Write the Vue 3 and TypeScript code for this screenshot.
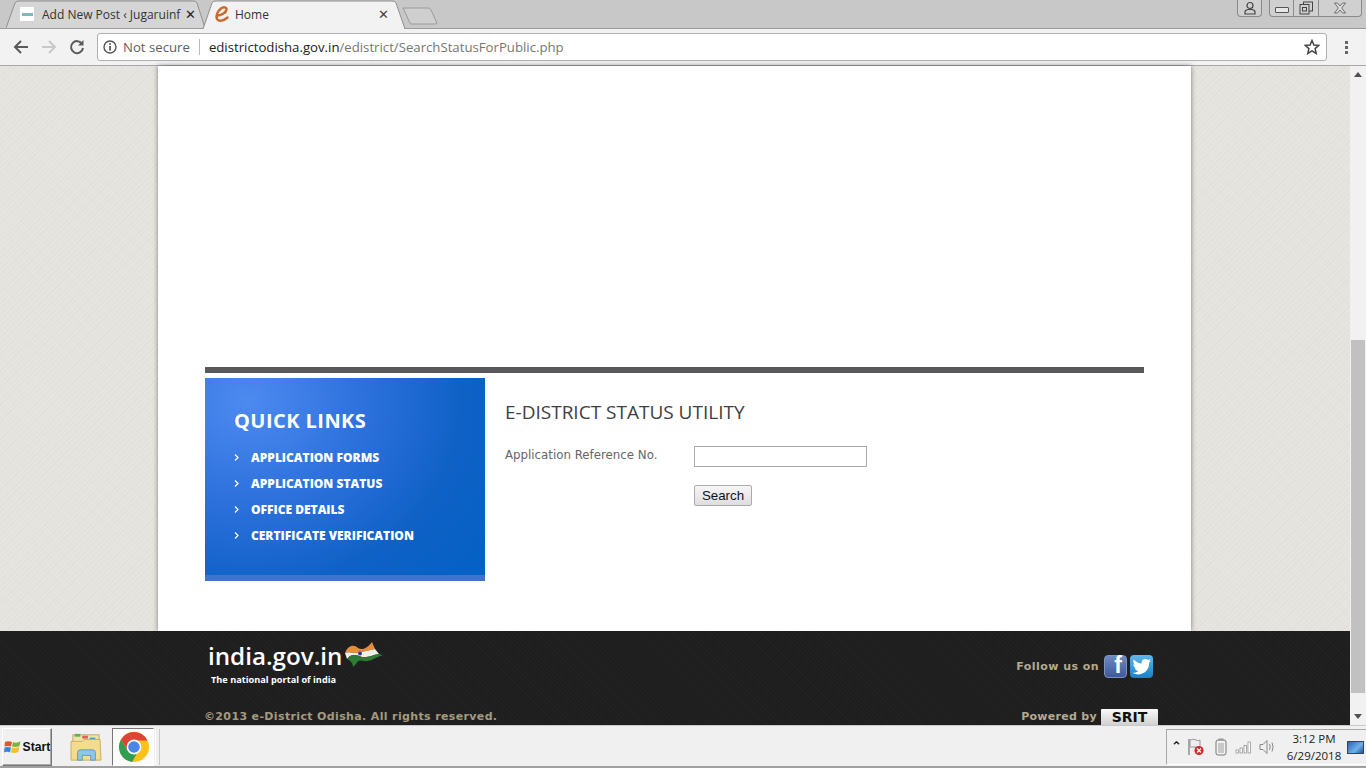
<script setup lang="ts">
const quickLinks: string[] = [
  'APPLICATION FORMS',
  'APPLICATION STATUS',
  'OFFICE DETAILS',
  'CERTIFICATE VERIFICATION',
]
</script>

<template>
  <div class="screen">
    <!-- browser chrome -->
    <header class="tabstrip">
      <div class="tab">
        <svg class="tab-shape" width="202" height="28" viewBox="0 0 202 28">
          <path d="M0 28 L9 3 Q10 1 13 1 L187 1 Q190 1 191 3 L199 28" fill="#d5d5d5" stroke="#8f8f8f" />
        </svg>
        <span class="favicon-site">
          <i></i>
        </span>
        <span class="tab-title">Add New Post ‹ Jugaruinf</span>
        <span class="tab-close dark">✕</span>
      </div>
      <div class="tab active">
        <svg class="tab-shape" width="204" height="29" viewBox="0 0 204 29">
          <path d="M0 29 L9 3 Q10 1 13 1 L189 1 Q192 1 193 3 L202 29" fill="#f2f2f2" stroke="#8f8f8f" />
        </svg>
        <svg class="favicon-e" width="16" height="18" viewBox="0 0 16 18">
          <path d="M3 10.5 C7 10.5 12 8 12.5 4.5 C12.8 2 9.5 1.5 7 3.5 C3.5 6.2 1.5 11 3 14 C4.5 16.8 9.5 16 13.5 12.5" fill="none" stroke="#c8682a" stroke-width="2.4" stroke-linecap="round" />
        </svg>
        <span class="tab-title home">Home</span>
        <span class="tab-close">✕</span>
      </div>
      <svg class="new-tab" width="36" height="18" viewBox="0 0 36 18">
        <path d="M1 1 L26 1 Q28 1 29 3 L35 16 Q35 17 33 17 L10 17 Q8 17 8 16 Z" fill="#cfcfcf" stroke="#9a9a9a" />
      </svg>
      <div class="window-controls">
        <div class="win-group user">
          <svg width="14" height="14" viewBox="0 0 14 14">
            <circle cx="7" cy="4.5" r="3" fill="none" stroke="#444" stroke-width="1.2" />
            <path d="M2 13 L2 11 Q2 9 5 8.5 L9 8.5 Q12 9 12 11 L12 13 Z" fill="none" stroke="#444" stroke-width="1.2" />
          </svg>
        </div>
        <div class="win-group">
          <div class="win-btn min"><i></i></div>
          <div class="win-btn restore">
            <svg width="14" height="14" viewBox="0 0 14 14">
              <rect x="4.5" y="1" width="9" height="9" fill="#d0d0d0" stroke="#444" />
              <rect x="1" y="3.5" width="9" height="9.5" fill="#d0d0d0" stroke="#444" />
              <rect x="3.5" y="6.5" width="4" height="3.5" fill="none" stroke="#444" />
            </svg>
          </div>
          <div class="win-btn close">
            <svg width="14" height="12" viewBox="0 0 14 12">
              <path d="M1.5 1 H4.5 L7 4 L9.5 1 H12.5 L8.7 6 L12.5 11 H9.5 L7 8 L4.5 11 H1.5 L5.3 6 Z" fill="#dcdcdc" stroke="#555" stroke-width="0.8" />
            </svg>
          </div>
        </div>
      </div>
    </header>

    <nav class="toolbar">
      <svg class="nav-icon" width="16" height="16" viewBox="0 0 16 16">
        <path d="M15 8 H2.5 M8 2 L2 8 L8 14" fill="none" stroke="#5a5a5a" stroke-width="2" />
      </svg>
      <svg class="nav-icon" width="16" height="16" viewBox="0 0 16 16">
        <path d="M1 8 H13.5 M8 2 L14 8 L8 14" fill="none" stroke="#c8c8c8" stroke-width="2" />
      </svg>
      <svg class="nav-icon" width="16" height="16" viewBox="0 0 16 16">
        <path d="M13.2 5 A6 6 0 1 0 14 9" fill="none" stroke="#5a5a5a" stroke-width="2" />
        <path d="M14.5 1 V6.5 H9 Z" fill="#5a5a5a" />
      </svg>
      <div class="omnibox">
        <svg width="14" height="14" viewBox="0 0 14 14">
          <circle cx="7" cy="7" r="6" fill="none" stroke="#555" stroke-width="1.4" />
          <rect x="6.2" y="6" width="1.7" height="4.5" fill="#555" />
          <rect x="6.2" y="3.2" width="1.7" height="1.7" fill="#555" />
        </svg>
        <span class="not-secure">Not secure</span>
        <span class="divider"></span>
        <span class="url"><b>edistrictodisha.gov.in</b>/edistrict/SearchStatusForPublic.php</span>
        <svg class="star" width="16" height="16" viewBox="0 0 16 16">
          <path d="M8 1.5 L9.9 6 L14.8 6.4 L11.1 9.6 L12.2 14.4 L8 11.9 L3.8 14.4 L4.9 9.6 L1.2 6.4 L6.1 6 Z" fill="none" stroke="#444" stroke-width="1.5" />
        </svg>
      </div>
      <div class="menu-dots"><i></i><i></i><i></i></div>
    </nav>

    <!-- page viewport -->
    <div class="viewport">
      <div class="page">
        <main class="panel">
          <div class="content">
            <div class="rule"></div>
            <div class="columns">
              <aside class="quick-links">
                <h2>QUICK LINKS</h2>
                <ul>
                  <li v-for="link in quickLinks" :key="link">
                    <svg width="5" height="7" viewBox="0 0 5 7">
                      <path d="M1 0.5 L4 3.5 L1 6.5" fill="none" stroke="#fff" stroke-width="1.2" />
                    </svg>
                    <a>{{ link }}</a>
                  </li>
                </ul>
              </aside>
              <section class="utility">
                <h1>E-DISTRICT STATUS UTILITY</h1>
                <div class="field">
                  <label>Application Reference No.</label>
                  <input type="text" />
                </div>
                <button type="button">Search</button>
              </section>
            </div>
          </div>
        </main>
        <footer class="site-footer">
          <div class="footer-inner">
            <div class="footer-row">
              <div class="portal">
                <div class="portal-name">
                  <span>india.gov.in</span>
                  <svg width="40" height="28" viewBox="0 0 40 28">
                    <path d="M1 13 C4 5 10 4 14 8 C19 11 24 7 28 2 L31 9 L13 13 L9 13 C6 12 3 12 1 13 Z" fill="#e88b3a" />
                    <path d="M1 13 C3 12 6 12 9 13 L13 13 L31 9 L35 14 C28 15 24 18 18 17 C13 15 10 14 6 16 L3 19 Z" fill="#f4efe4" />
                    <path d="M3 19 L6 16 C10 14 13 15 18 17 C24 18 28 15 35 14 L39 15 C31 18 26 22 20 21 C16 20 14 20 12 24 L9 27 C9 23 6 20 3 19 Z" fill="#2f7a35" />
                    <circle cx="16" cy="13.5" r="2" fill="#2b3f8c" />
                  </svg>
                </div>
                <div class="portal-tag">The national portal of india</div>
              </div>
              <div class="follow">
                <span>Follow us on</span>
                <span class="social fb">f</span>
                <span class="social tw">
                  <svg width="20" height="17" viewBox="0 0 20 17">
                    <path d="M19 2.5 C18.3 2.9 17.6 3.1 16.8 3.2 C17.6 2.7 18.2 2 18.5 1.1 C17.7 1.6 16.9 1.9 16 2.1 C14.5 0.5 12 0.6 10.6 2.1 C9.7 3.1 9.4 4.4 9.7 5.6 C6.6 5.4 3.7 3.9 1.8 1.5 C0.8 3.3 1.3 5.5 3 6.7 C2.4 6.7 1.8 6.5 1.2 6.2 C1.2 8.1 2.6 9.8 4.5 10.2 C3.9 10.4 3.3 10.4 2.7 10.3 C3.2 11.9 4.7 13 6.4 13.1 C4.7 14.4 2.6 15 0.5 14.8 C7 18.9 17.4 15 17.2 4.5 C17.9 4 18.5 3.3 19 2.5 Z" fill="#fff" />
                  </svg>
                </span>
              </div>
            </div>
            <div class="footer-row bottom">
              <span class="copyright">©2013 e-District Odisha. All rights reserved.</span>
              <div class="powered">
                <span>Powered by</span>
                <span class="srit">SRIT</span>
              </div>
            </div>
          </div>
        </footer>
      </div>
      <div class="scrollbar">
        <span class="arrow up"></span>
        <div class="track"><div class="thumb"></div></div>
        <span class="arrow down"></span>
      </div>
    </div>

    <!-- windows taskbar -->
    <div class="taskbar">
      <div class="start">
        <svg width="18" height="16" viewBox="0 0 18 16">
          <path d="M1 3 Q4 1.5 8 3 L7 7.5 Q4 6.5 0.5 7.5 Z" fill="#e0562b" />
          <path d="M9 3 Q12 4.5 16.5 2.5 L15.5 7 Q12 8.5 8 7.5 Z" fill="#7db636" />
          <path d="M0.5 8.5 Q4 7.5 7 8.5 L6 13.5 Q3 12 0 13.5 Z" fill="#3a86d6" />
          <path d="M8 8.5 Q12 9.5 15.3 8 L14.3 13 Q10.5 14.5 7 13.5 Z" fill="#f0c02f" />
        </svg>
        <span>Start</span>
      </div>
      <div class="task-item">
        <svg width="32" height="30" viewBox="0 0 34 32">
          <rect x="3" y="3" width="28" height="10" fill="#efe3a8" stroke="#b9a865" />
          <rect x="5" y="2" width="6" height="3" fill="#67b04f" />
          <rect x="13" y="4" width="6" height="3" fill="#d8625a" />
          <rect x="21" y="6" width="6" height="3" fill="#4c9ccf" />
          <path d="M1 10 L13 10 L15 8 L32 8 L33 30 L1 30 Z" fill="#f4dc8e" stroke="#c8ad62" />
          <path d="M8 30 L8 22 Q8 19 11 19 L24 19 Q27 19 27 22 L27 30 L22 30 L22 25 L13 25 L13 30 Z" fill="#8cc6e8" stroke="#5b9cc4" />
        </svg>
      </div>
      <div class="task-item active">
        <svg width="32" height="32" viewBox="0 0 32 32">
          <circle cx="16" cy="16" r="15" fill="#fbc116" />
          <path d="M16 1 A15 15 0 0 0 3 8.5 L9.5 20 L16 9.5 L29.4 9.5 A15 15 0 0 0 16 1 Z" fill="#dd4436" />
          <path d="M3 8.5 A15 15 0 0 0 14 30.9 L20.3 20 L9.5 20 Z" fill="#2f9e50" />
          <circle cx="16" cy="16" r="7.4" fill="#fff" />
          <circle cx="16" cy="16" r="5.8" fill="#4a86e8" />
        </svg>
      </div>
      <div class="task-sep"></div>
      <div class="tray">
        <span class="tray-chevron">⌃</span>
        <svg class="tray-flag" width="18" height="18" viewBox="0 0 18 18">
          <path d="M2 1 V17" stroke="#888" stroke-width="1.4" />
          <path d="M3 2 Q7 0.5 9 2 Q11 3.5 13 2 V9 H3 Z" fill="#eee" stroke="#999" />
          <circle cx="12" cy="12.5" r="4.6" fill="#cf2b2b" />
          <path d="M10 10.5 L14 14.5 M14 10.5 L10 14.5" stroke="#fff" stroke-width="1.2" />
        </svg>
        <svg class="tray-battery" width="12" height="18" viewBox="0 0 12 18">
          <rect x="1" y="2" width="10" height="15" rx="2" fill="#f2f2f2" stroke="#777" />
          <rect x="3.5" y="0.5" width="5" height="2" fill="#999" />
          <rect x="3" y="5" width="6" height="10" fill="#c8c8c8" />
        </svg>
        <svg class="tray-signal" width="18" height="14" viewBox="0 0 18 14">
          <rect x="1" y="10" width="2.4" height="3" fill="#fff" stroke="#888" stroke-width="0.7" />
          <rect x="5" y="8" width="2.4" height="5" fill="#fff" stroke="#888" stroke-width="0.7" />
          <rect x="9" y="5.5" width="2.4" height="7.5" fill="#fff" stroke="#888" stroke-width="0.7" />
          <rect x="13" y="2" width="2.4" height="11" fill="#fff" stroke="#888" stroke-width="0.7" />
        </svg>
        <svg class="tray-sound" width="18" height="16" viewBox="0 0 18 16">
          <path d="M1 5.5 H4 L8 1.5 V14.5 L4 10.5 H1 Z" fill="#f0f0f0" stroke="#888" />
          <path d="M10.5 5 Q12 8 10.5 11 M13 3.5 Q15.2 8 13 12.5" fill="none" stroke="#888" />
        </svg>
        <div class="clock">
          <div>3:12 PM</div>
          <div>6/29/2018</div>
        </div>
        <span class="show-desktop"></span>
      </div>
    </div>
  </div>
</template>

<style scoped>
.screen {
  width: 1366px;
  height: 768px;
  overflow: hidden;
  display: flex;
  flex-direction: column;
  font-family: "Open Sans", "Liberation Sans", sans-serif;
  background: #e4e3de;
}

/* Tabs */
.tabstrip {
  height: 28px;
  flex: none;
  display: flex;
  align-items: flex-start;
  padding-left: 6px;
  background: #c8c8c8;
  position: relative;
  z-index: 1;
}

.tab {
  position: relative;
  width: 197px;
  height: 28px;
  display: flex;
  align-items: center;
  flex: none;
  font-size: 12px;
  color: #333;
}

.tab.active {
  width: 201px;
  z-index: 1;
}

.tab-shape {
  position: absolute;
  left: 0;
  top: 0;
}

.favicon-site {
  position: relative;
  margin-left: 14px;
  width: 14px;
  height: 14px;
  background: #fff;
  display: flex;
  align-items: center;
  justify-content: center;
}

.favicon-site i {
  width: 11px;
  height: 3px;
  background: #7fb6c0;
}

.favicon-e {
  position: relative;
  margin-left: 11px;
}

.tab-title {
  position: relative;
  margin-left: 8px;
  width: 143px;
  white-space: nowrap;
}

.tab-title.home {
  margin-left: 5px;
  width: 143px;
}

.tab-close {
  position: relative;
  font-size: 13px;
  font-weight: 700;
  color: #444;
  font-family: "DejaVu Sans", sans-serif;
}

.tab-close.dark {
  color: #222;
}

.new-tab {
  margin: 7px 0 0 -2px;
  flex: none;
}

.window-controls {
  margin-left: auto;
  display: flex;
  gap: 7px;
  margin-right: 4px;
}

.win-group {
  display: flex;
  height: 16px;
  border: 1px solid #8a8a8a;
  border-top: none;
  border-radius: 0 0 4px 4px;
  background: #d0d0d0;
  overflow: hidden;
}

.win-group.user {
  width: 23px;
  align-items: center;
  justify-content: center;
}

.win-btn {
  height: 100%;
  display: flex;
  align-items: center;
  justify-content: center;
  border-right: 1px solid #8a8a8a;
}

.win-btn.min {
  width: 23px;
}

.win-btn.min i {
  width: 12px;
  height: 4px;
  margin-top: 4px;
  border: 1px solid #555;
  border-radius: 1px;
  background: #e6e6e6;
}

.win-btn.restore {
  width: 24px;
}

.win-btn.close {
  width: 42px;
  border-right: none;
}

/* Toolbar */
.toolbar {
  height: 38px;
  flex: none;
  display: flex;
  align-items: center;
  padding-left: 13px;
  gap: 12px;
  background: #f2f2f2;
  border-top: 1px solid #9c9c9c;
  border-bottom: 1px solid #a8a8a8;
  box-sizing: border-box;
}

.omnibox {
  width: 1230px;
  height: 28px;
  box-sizing: border-box;
  display: flex;
  align-items: center;
  padding: 0 6px 0 5px;
  background: #fff;
  border: 1px solid #b0b0b0;
  border-radius: 3px;
  font-size: 13.2px;
  color: #6a6a6a;
}

.not-secure {
  margin-left: 6px;
  color: #5e5e5e;
}

.divider {
  width: 1px;
  height: 16px;
  margin: 0 9px;
  background: #bbb;
}

.url {
  flex: 1;
  color: #767676;
}

.url b {
  font-weight: 400;
  color: #222;
}

.menu-dots {
  display: flex;
  flex-direction: column;
  gap: 2px;
  margin-left: 6px;
}

.menu-dots i {
  width: 3px;
  height: 3px;
  background: #666;
}

/* Page */
.viewport {
  height: 659px;
  flex: none;
  display: flex;
}

.page {
  width: 1350px;
  display: flex;
  flex-direction: column;
  background-color: #e4e3de;
  background-image:
    repeating-linear-gradient(45deg, rgba(255, 255, 255, 0.12) 0 1px, transparent 1px 3px),
    repeating-linear-gradient(-45deg, rgba(0, 0, 0, 0.02) 0 1px, transparent 1px 4px);
}

.panel {
  height: 565px;
  flex: none;
  width: 1033px;
  margin-left: 158px;
  box-sizing: border-box;
  padding: 301px 47px 0;
  background: #fff;
  box-shadow: 0 0 5px rgba(0, 0, 0, 0.45);
}

.content {
  width: 939px;
}

.rule {
  height: 6px;
  background: #58585a;
}

.columns {
  display: flex;
  margin-top: 5px;
}

.quick-links {
  width: 280px;
  height: 203px;
  flex: none;
  box-sizing: border-box;
  padding: 29px 0 0 29px;
  border-bottom: 6px solid #3f74cc;
  background: radial-gradient(ellipse 300px 260px at 15% 12%, #4d8af0 0%, #2c70dc 40%, #0f61c6 72%, #0561c4 100%);
  color: #fff;
}

.quick-links h2 {
  margin: 0 0 10px;
  font-size: 20px;
  line-height: 27px;
  font-weight: 700;
  letter-spacing: 0.45px;
}

.quick-links ul {
  list-style: none;
  margin: 0;
  padding: 0;
}

.quick-links li {
  height: 26px;
  display: flex;
  align-items: center;
  font-size: 12px;
  font-weight: 800;
}

.quick-links li a {
  margin-left: 12px;
}

.utility {
  padding: 22px 0 0 20px;
}

.utility h1 {
  margin: 0 0 21px;
  font-size: 19px;
  line-height: 25px;
  font-weight: 400;
  color: #40403f;
}

.field {
  display: flex;
  align-items: flex-start;
}

.field label {
  width: 189px;
  margin-top: 1px;
  font-family: "DejaVu Sans", sans-serif;
  font-size: 11.8px;
  line-height: 17px;
  color: #666;
}

.field input {
  width: 173px;
  height: 21px;
  box-sizing: border-box;
  padding: 0;
  border: 1px solid #a9a9a9;
  background: #fff;
}

.utility button {
  display: block;
  width: 58px;
  height: 21px;
  margin: 18px 0 0 189px;
  padding: 0;
  border: 1px solid #ababab;
  border-radius: 2px;
  background: linear-gradient(#f6f6f6, #dedede);
  font-family: "Liberation Sans", sans-serif;
  font-size: 13.3px;
  color: #111;
}

/* Footer */
.site-footer {
  flex: 1;
  background-color: #1e1e1e;
  background-image: repeating-linear-gradient(45deg, rgba(255, 255, 255, 0.018) 0 1px, transparent 1px 3px);
}

.footer-inner {
  width: 948px;
  margin-left: 205px;
  height: 100%;
  display: flex;
  flex-direction: column;
  justify-content: space-between;
}

.footer-row {
  display: flex;
  justify-content: space-between;
}

.portal {
  padding: 8px 0 0 3px;
}

.portal-name {
  display: flex;
  align-items: flex-start;
  color: #fff;
  font-size: 24.2px;
  font-weight: 600;
  line-height: 34px;
  white-space: nowrap;
}

.portal-name svg {
  margin-top: 1px;
  margin-left: 2px;
}

.portal-tag {
  margin: 0 0 0 3px;
  color: #fff;
  font-size: 9.2px;
  font-weight: 700;
  line-height: 13px;
}

.follow {
  display: flex;
  align-items: center;
  height: 24px;
  margin-top: 23px;
  color: #b5aa8e;
  font-family: "DejaVu Sans", sans-serif;
  font-size: 11px;
  font-weight: 700;
  letter-spacing: 0.45px;
}

.social {
  width: 23px;
  height: 23px;
  border-radius: 4px;
  display: flex;
  align-items: center;
  justify-content: center;
  flex: none;
}

.social.fb {
  margin-left: 5px;
  background: linear-gradient(#6d88c2, #3d5a9a);
  border: 1px solid #7e92bd;
  color: #fff;
  font-family: "Liberation Sans", sans-serif;
  font-size: 23px;
  font-weight: 700;
  letter-spacing: 0;
  padding-left: 5px;
  box-sizing: border-box;
  align-items: flex-end;
  line-height: 23px;
}

.social.tw {
  margin-left: 3px;
  background: linear-gradient(#5cb8ee, #1f7fc0);
}

.bottom {
  align-items: flex-end;
  height: 17px;
}

.copyright {
  margin-left: -1px;
  color: #a49a7e;
  font-family: "DejaVu Sans", sans-serif;
  font-size: 11px;
  font-weight: 700;
  letter-spacing: 0.36px;
  line-height: 16px;
}

.powered {
  display: flex;
  align-items: flex-end;
  margin-right: -5px;
  color: #b5aa8e;
  font-family: "DejaVu Sans", sans-serif;
  font-size: 11px;
  font-weight: 700;
  letter-spacing: 0.3px;
  line-height: 16px;
}

.srit {
  width: 57px;
  height: 16px;
  margin-left: 4px;
  background: linear-gradient(#fafafa, #d0d0d0);
  color: #111;
  font-size: 14px;
  letter-spacing: 0;
  text-align: center;
  border-radius: 1px 1px 0 0;
}

/* Scrollbar */
.scrollbar {
  width: 16px;
  flex: none;
  display: flex;
  flex-direction: column;
  background: #f1f1f1;
}

.track {
  flex: 1;
  padding-top: 257px;
}

.thumb {
  height: 353px;
  background: #c1c1c1;
  margin: 0 1px;
}

.arrow {
  height: 17px;
  flex: none;
  position: relative;
}

.arrow::after {
  content: "";
  position: absolute;
  left: 4px;
  top: 6px;
  border-left: 4px solid transparent;
  border-right: 4px solid transparent;
}

.arrow.up::after {
  border-bottom: 5px solid #505050;
}

.arrow.down::after {
  border-top: 5px solid #505050;
}

/* Taskbar */
.taskbar {
  height: 43px;
  flex: none;
  box-sizing: border-box;
  display: flex;
  align-items: center;
  padding-top: 1px;
  background: #f0f0f0;
  border-top: 1px solid #c9c9c9;
  border-bottom: 2px solid #a0a0a0;
}

.start {
  width: 50px;
  height: 38px;
  margin-left: 2px;
  box-sizing: border-box;
  display: flex;
  align-items: center;
  justify-content: center;
  gap: 1px;
  border: 1px solid #fff;
  border-right-color: #777;
  border-bottom-color: #777;
  box-shadow: inset -1px -1px 0 #aaa;
  font-family: "Liberation Sans", sans-serif;
  font-size: 12.2px;
  font-weight: 700;
  color: #111;
}

.task-item {
  width: 42px;
  height: 38px;
  margin-left: 13px;
  display: flex;
  align-items: center;
  justify-content: center;
  box-sizing: border-box;
}

.task-item + .task-item {
  margin-left: 5px;
}

.task-item.active {
  background: #fbfbfb;
  border: 1px solid #777;
  border-right-color: #fff;
  border-bottom-color: #fff;
  padding-left: 1px;
}

.task-sep {
  width: 3px;
  height: 36px;
  margin-left: 1px;
  border-left: 1px solid #fff;
  border-right: 1px solid #c8c8c8;
}

.tray {
  margin-left: auto;
  width: 200px;
  height: 36px;
  box-sizing: border-box;
  display: flex;
  align-items: center;
  padding-left: 4px;
  border: 1px solid #a8a8a8;
  border-right: none;
  border-bottom-color: #fff;
  margin-top: 1px;
}

.tray-chevron {
  font-size: 13px;
  font-weight: 700;
  color: #111;
  width: 8px;
  font-family: "DejaVu Sans", sans-serif;
  line-height: 12px;
}

.tray-flag {
  margin-left: 8px;
}

.tray-battery {
  margin-left: 10px;
}

.tray-signal {
  margin-left: 8px;
}

.tray-sound {
  margin-left: 6px;
}

.clock {
  width: 60px;
  margin-left: 7px;
  text-align: center;
  font-size: 11.5px;
  line-height: 17px;
  color: #222;
  white-space: nowrap;
}

.show-desktop {
  width: 15px;
  height: 11px;
  margin-left: 3px;
  background: linear-gradient(135deg, #2a62b8, #6fb0ea 60%, #20509a);
  border: 1px solid #345;
}
</style>

<style>
html,
body {
  margin: 0;
  overflow: hidden;
}
</style>
